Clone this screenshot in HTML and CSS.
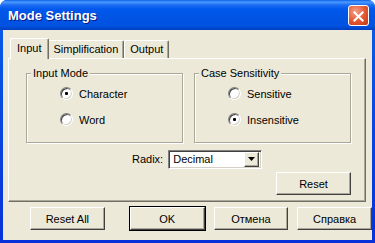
FILE: index.html
```html
<!DOCTYPE html>
<html>
  <head>
    <meta charset="UTF-8">
    <title>Mode Settings</title>
    <link rel="stylesheet" href="styles.css">
  </head>
  <body>
    <div class="window">
      <div class="titlebar">
        <span class="title">Mode Settings</span>
        <span class="close">
          <svg width="21" height="21" viewBox="0 0 21 21">
            <path d="M6 6 L15 15 M15 6 L6 15" stroke="#fff" stroke-width="2.2" stroke-linecap="square"/>
          </svg>
        </span>
      </div>
      <div class="client">
        <div class="tabs">
          <div class="tab active">Input</div>
          <div class="tab">Simplification</div>
          <div class="tab">Output</div>
        </div>
        <div class="panel">
          <div class="groups">
            <fieldset class="group">
              <legend>Input Mode</legend>
              <div class="radio checked"><span class="dot"></span>Character</div>
              <div class="radio"><span class="dot"></span>Word</div>
            </fieldset>
            <fieldset class="group">
              <legend>Case Sensitivity</legend>
              <div class="radio"><span class="dot"></span>Sensitive</div>
              <div class="radio checked"><span class="dot"></span>Insensitive</div>
            </fieldset>
          </div>
          <div class="radix">
            <span class="label">Radix:</span>
            <div class="select">
              <span class="value">Decimal</span>
              <span class="arrow"><svg width="7" height="4" viewBox="0 0 7 4"><path d="M0 0 H7 L3.5 4 Z" fill="#000"/></svg></span>
            </div>
          </div>
          <div class="reset-row">
            <div class="btn">Reset</div>
          </div>
        </div>
        <div class="footer">
          <div class="btn">Reset All</div>
          <div class="btn default">OK</div>
          <div class="btn">Отмена</div>
          <div class="btn">Справка</div>
        </div>
      </div>
    </div>
  </body>
</html>
```

FILE: styles.css
```css
html, body
{
  margin:0;
  padding:0;
  background:#fff
}
body
{
  font-family:"Liberation Sans", Arial, sans-serif;
  font-size:11px;
  color:#000
}
.window
{
  width:375px;
  height:243px;
  box-sizing:border-box;
  background:linear-gradient(#0A5FE8, #0831D9);
  border-radius:7px 7px 0 0;
  padding:0 3px 3px 3px
}
.titlebar
{
  height:30px;
  margin:0 -3px;
  border-radius:7px 7px 0 0;
  background:linear-gradient(#0A5FE8 0, #4C9BFF 2px, #1D6CF2 5px, #0058EE 9px, #0055E5 50%, #0153E1 85%, #003FC0 100%);
  display:flex;
  align-items:center;
  justify-content:space-between;
  padding:0 6px 0 8px
}
.title
{
  color:#fff;
  font-weight:bold;
  font-size:13px;
  text-shadow:1px 1px #0A1883;
  margin-top:1px
}
.close
{
  width:21px;
  height:21px;
  box-sizing:border-box;
  border:1px solid #fff;
  border-radius:3px;
  background:radial-gradient(circle at 35% 30%, #F4A08A 0, #E2552E 55%, #C4391A 100%);
  display:flex
}
.client
{
  background:#ECE9D8;
  height:210px;
  padding-top:7px;
  box-sizing:border-box
}
.tabs
{
  display:flex;
  align-items:flex-end;
  height:21px;
  padding-left:9px;
  position:relative;
  z-index:1
}
.tab
{
  height:17px;
  line-height:16px;
  padding:0 5px;
  border:1px solid;
  border-color:#fff #716F64 transparent #fff;
  border-bottom:0;
  border-radius:2px 2px 0 0;
  box-shadow:inset -1px 0 #ACA899;
  background:#ECE9D8
}
.tab.active
{
  height:20px;
  line-height:19px;
  padding:0 7px 0 6px;
  margin-left:-2px;
  margin-right:-2px;
  margin-bottom:-1px;
  position:relative;
  z-index:2
}
.panel
{
  margin:0 6px 0 5px;
  height:144px;
  box-sizing:border-box;
  border:1px solid;
  border-color:#fff #716F64 #716F64 #fff;
  box-shadow:inset -1px -1px #ACA899;
  padding:8px 14px 0 17px
}
.groups
{
  display:flex;
  justify-content:space-between;
  height:76px
}
.group
{
  width:157px;
  margin:0;
  padding:0 0 0 4px;
  box-sizing:border-box;
  border:1px solid #ACA899;
  box-shadow:inset 1px 1px #fff, 1px 1px #fff
}
.group legend
{
  padding:0 2px;
  margin-left:0;
  background:#ECE9D8;
  line-height:13px
}
.radio
{
  display:flex;
  align-items:center;
  height:13px;
  margin:7px 0 13px 29px
}
.dot
{
  width:13px;
  height:13px;
  box-sizing:border-box;
  border-radius:50%;
  border:1px solid;
  border-color:#808080 #fff #fff #808080;
  box-shadow:inset 1px 1px #404040, inset -1px -1px #D4D0C8;
  background:#fff;
  margin-right:6px;
  position:relative
}
.radio.checked .dot::after
{
  content:"";
  position:absolute;
  left:4px;
  top:4px;
  width:3px;
  height:3px;
  border-radius:1px;
  background:#000
}
.radix
{
  display:flex;
  align-items:center;
  margin-top:7px;
  padding-left:106px;
  height:18px
}
.radix .label
{
  margin-right:5px
}
.select
{
  width:94px;
  height:19px;
  box-sizing:border-box;
  border:1px solid;
  border-color:#808080 #fff #fff #808080;
  box-shadow:inset 1px 1px #404040, inset -1px -1px #D4D0C8;
  background:#fff;
  display:flex;
  align-items:center;
  justify-content:space-between;
  padding:2px
}
.select .value
{
  padding-left:2px
}
.arrow
{
  width:15px;
  height:15px;
  box-sizing:border-box;
  background:#ECE9D8;
  border:1px solid;
  border-color:#fff #404040 #404040 #fff;
  box-shadow:inset -1px -1px #ACA899;
  display:flex;
  align-items:center;
  justify-content:center
}
.reset-row
{
  display:flex;
  justify-content:flex-end;
  margin-top:4px
}
.btn
{
  width:75px;
  height:23px;
  box-sizing:border-box;
  border:1px solid;
  border-color:#fff #404040 #404040 #fff;
  box-shadow:inset -1px -1px #ACA899;
  background:#ECE9D8;
  display:flex;
  align-items:center;
  justify-content:center
}
.btn.default
{
  outline:1px solid #000;
  outline-offset:0;
  border-color:#fff #404040 #404040 #fff
}
.footer
{
  display:flex;
  margin-top:5px;
  padding-left:27px;
  gap:9px
}
.footer .btn:first-child
{
  margin-right:16px
}
```
